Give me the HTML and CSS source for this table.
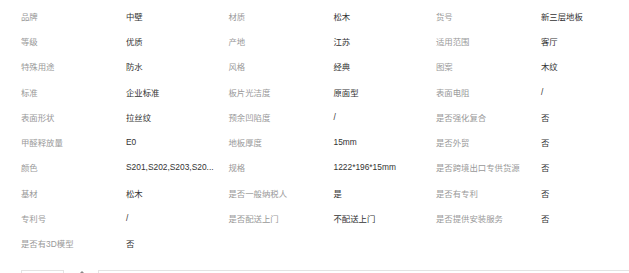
FILE: index.html
```html
<!DOCTYPE html>
<html lang="zh-CN">
<head>
<meta charset="utf-8">
<title>商品参数</title>
<link rel="stylesheet" href="styles.css">
</head>
<body>
<div class="params">
  <div class="item"><span class="label">品牌</span><span class="value">中壁</span></div>
  <div class="item"><span class="label">材质</span><span class="value">松木</span></div>
  <div class="item"><span class="label">货号</span><span class="value">新三层地板</span></div>

  <div class="item"><span class="label">等级</span><span class="value">优质</span></div>
  <div class="item"><span class="label">产地</span><span class="value">江苏</span></div>
  <div class="item"><span class="label">适用范围</span><span class="value">客厅</span></div>

  <div class="item"><span class="label">特殊用途</span><span class="value">防水</span></div>
  <div class="item"><span class="label">风格</span><span class="value">经典</span></div>
  <div class="item"><span class="label">图案</span><span class="value">木纹</span></div>

  <div class="item"><span class="label">标准</span><span class="value">企业标准</span></div>
  <div class="item"><span class="label">板片光洁度</span><span class="value">原面型</span></div>
  <div class="item"><span class="label">表面电阻</span><span class="value">/</span></div>

  <div class="item"><span class="label">表面形状</span><span class="value">拉丝纹</span></div>
  <div class="item"><span class="label">预余凹陷度</span><span class="value">/</span></div>
  <div class="item"><span class="label">是否强化复合</span><span class="value">否</span></div>

  <div class="item"><span class="label">甲醛释放量</span><span class="value">E0</span></div>
  <div class="item"><span class="label">地板厚度</span><span class="value">15mm</span></div>
  <div class="item"><span class="label">是否外贸</span><span class="value">否</span></div>

  <div class="item"><span class="label">颜色</span><span class="value">S201,S202,S203,S20...</span></div>
  <div class="item"><span class="label">规格</span><span class="value">1222*196*15mm</span></div>
  <div class="item"><span class="label">是否跨境出口专供货源</span><span class="value">否</span></div>

  <div class="item"><span class="label">基材</span><span class="value">松木</span></div>
  <div class="item"><span class="label">是否一般纳税人</span><span class="value">是</span></div>
  <div class="item"><span class="label">是否有专利</span><span class="value">否</span></div>

  <div class="item"><span class="label">专利号</span><span class="value">/</span></div>
  <div class="item"><span class="label">是否配送上门</span><span class="value">不配送上门</span></div>
  <div class="item"><span class="label">是否提供安装服务</span><span class="value">否</span></div>

  <div class="item"><span class="label">是否有3D模型</span><span class="value">否</span></div>
</div>
<div class="toolbar">
  <div class="select-box"></div>
  <div class="arrow"></div>
  <div class="input-box"></div>
</div>
</body>
</html>
```
FILE: styles.css
```css
html, body {
  margin: 0;
  padding: 0;
  background: #fff;
  overflow: hidden;
}

body {
  font-family: "Liberation Sans", "Noto Sans CJK SC", sans-serif;
  font-size: 8.4px;
  padding-top: 3px;
}

.params {
  display: grid;
  grid-template-columns: repeat(3, 207.5px);
  grid-auto-rows: 25.3px;
  padding-left: 21px;
}

.item {
  display: flex;
  align-items: center;
  white-space: nowrap;
}

.label {
  width: 105px;
  flex: none;
  color: #999;
}

.value {
  color: #333;
}

.toolbar {
  display: flex;
  align-items: flex-start;
  margin-top: 14px;
  padding-left: 21px;
  height: 3px;
  overflow: hidden;
}

.select-box {
  width: 41px;
  height: 3px;
  border: 1px solid #e3e3e3;
  border-bottom: none;
}

.arrow {
  width: 0;
  height: 0;
  margin: 1px 0 0 16px;
  border-left: 2px solid transparent;
  border-right: 2px solid transparent;
  border-bottom: 2px solid #888;
}

.input-box {
  flex: 1;
  height: 3px;
  margin-left: 14px;
  border: 1px solid #e3e3e3;
  border-right: none;
  border-bottom: none;
}
```
